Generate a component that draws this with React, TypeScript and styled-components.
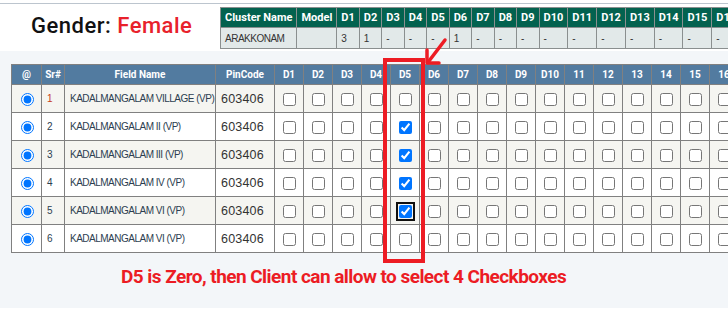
import React from "react";
import styled, { createGlobalStyle } from "styled-components";

const Global = createGlobalStyle`
  html, body { margin: 0; padding: 0; background: #fff; overflow: hidden; }
  body { font-family: "Liberation Sans", Arial, sans-serif; }
`;

const Page = styled.div`
  position: relative;
  width: 728px;
  height: 320px;
  overflow: hidden;
  background: #fff;
`;

const TopBar = styled.header`
  margin-top: 3px;
  border-top: 1px solid #bcc5ce;
  height: 47px;
  display: flex;
  align-items: flex-start;
  background: #fff;
`;

const Title = styled.h1`
  margin: 9px 0 0;
  width: 220px;
  box-sizing: border-box;
  padding-left: 31px;
  flex-shrink: 0;
  font-family: Roboto, "Liberation Sans", sans-serif;
  font-weight: 500;
  font-size: 22px;
  line-height: 26px;
  letter-spacing: 0.5px;
  color: #111;
  white-space: nowrap;
`;

const Accent = styled.span`
  color: #e8212b;
`;

const ClusterTable = styled.table`
  margin-top: 3px;
  border-collapse: collapse;
  flex-shrink: 0;
`;

const ClusterHead = styled.th`
  height: 20px;
  padding: 0 4px;
  box-sizing: border-box;
  background: #03624f;
  color: #fff;
  border: 1px solid #8a8f8f;
  font-family: Roboto, "Liberation Sans", sans-serif;
  font-weight: 700;
  font-size: 11px;
  white-space: nowrap;
  text-align: center;
`;

const ClusterCell = styled.td`
  height: 21px;
  padding: 0 4px;
  box-sizing: border-box;
  background: #e2e9e9;
  color: #333;
  border: 1px solid #8a8f8f;
  font-size: 10px;
  letter-spacing: -0.5px;
  white-space: nowrap;
  text-align: left;
`;

const Main = styled.main`
  background: #f3f6f9;
  padding: 13px 0 19px 11px;
`;

const Grid = styled.table`
  border-collapse: collapse;
  table-layout: fixed;
  width: 843px;
`;

const HeadCell = styled.th`
  height: 20px;
  padding: 0;
  box-sizing: border-box;
  background: #527ba0;
  color: #fff;
  border: 1px solid #808080;
  font-family: Roboto, "Liberation Sans", sans-serif;
  font-weight: 700;
  font-size: 10px;
  text-align: center;
  white-space: nowrap;
`;

const Row = styled.tr<{ $odd: boolean }>`
  background: ${(p) => (p.$odd ? "#f5f5f1" : "#ffffff")};
`;

const Cell = styled.td<{ $accent?: boolean }>`
  height: 28px;
  padding: 0 5px;
  box-sizing: border-box;
  border: 1px solid #808080;
  font-size: 10px;
  letter-spacing: -0.5px;
  color: ${(p) => (p.$accent ? "#c8401a" : "#2c3e50")};
  white-space: nowrap;
  overflow: hidden;
`;

const PinCell = styled(Cell)`
  font-size: 12.5px;
  letter-spacing: 0.2px;
  color: #333;
`;

const CenterCell = styled.td`
  height: 28px;
  padding: 0;
  box-sizing: border-box;
  border: 1px solid #808080;
  text-align: center;
  vertical-align: middle;
`;

const Radio = styled.input`
  vertical-align: middle;
  margin: 0 0 0 2px;
  width: 13px;
  height: 13px;
`;

const Check = styled.input<{ $focused?: boolean }>`
  vertical-align: middle;
  margin: 0 0 0 1px;
  width: 13px;
  height: 13px;
  ${(p) =>
    p.$focused
      ? `outline: 2px solid #101010; outline-offset: 1px;`
      : ``}
`;

const Note = styled.p`
  margin: 12px 0 0 110px;
  font-family: Roboto, "Liberation Sans", sans-serif;
  font-weight: 700;
  font-size: 19px;
  line-height: 24px;
  letter-spacing: -0.55px;
  color: #ec1c24;
  white-space: nowrap;
`;

const Highlight = styled.div`
  position: absolute;
  left: 383px;
  top: 58px;
  width: 42px;
  height: 205px;
  box-sizing: border-box;
  border: 4px solid #ed1c24;
  pointer-events: none;
`;

const Arrow = styled.svg`
  position: absolute;
  left: 420px;
  top: 34px;
  overflow: visible;
  pointer-events: none;
`;

const clusterCols = Array.from({ length: 17 }, (_, i) => `D${i + 1}`);
const clusterVals = ["3", "1", "-", "-", "-", "1", "-", "-", "-", "-", "-", "-", "-", "-", "-", "-", "-"];

const dCols = [
  ...Array.from({ length: 10 }, (_, i) => `D${i + 1}`),
  ...Array.from({ length: 10 }, (_, i) => `${i + 11}`),
];

const fields = [
  "KADALMANGALAM VILLAGE (VP)",
  "KADALMANGALAM II (VP)",
  "KADALMANGALAM III (VP)",
  "KADALMANGALAM IV (VP)",
  "KADALMANGALAM VI (VP)",
  "KADALMANGALAM VI (VP)",
];

const colWidths = [30, 23, 151, 59, ...dCols.map(() => 29)];

export default function App() {
  return (
    <Page>
      <Global />
      <TopBar>
        <Title>
          Gender: <Accent>Female</Accent>
        </Title>
        <ClusterTable>
          <thead>
            <tr>
              <ClusterHead>Cluster Name</ClusterHead>
              <ClusterHead>Model</ClusterHead>
              {clusterCols.map((c) => (
                <ClusterHead key={c}>{c}</ClusterHead>
              ))}
            </tr>
          </thead>
          <tbody>
            <tr>
              <ClusterCell>ARAKKONAM</ClusterCell>
              <ClusterCell></ClusterCell>
              {clusterVals.map((v, i) => (
                <ClusterCell key={i}>{v}</ClusterCell>
              ))}
            </tr>
          </tbody>
        </ClusterTable>
      </TopBar>
      <Main>
        <Grid>
          <colgroup>
            {colWidths.map((w, i) => (
              <col key={i} style={{ width: w }} />
            ))}
          </colgroup>
          <thead>
            <tr>
              <HeadCell>@</HeadCell>
              <HeadCell>Sr#</HeadCell>
              <HeadCell>Field Name</HeadCell>
              <HeadCell>PinCode</HeadCell>
              {dCols.map((d) => (
                <HeadCell key={d}>{d}</HeadCell>
              ))}
            </tr>
          </thead>
          <tbody>
            {fields.map((f, r) => (
              <Row key={r} $odd={r % 2 === 0}>
                <CenterCell>
                  <Radio type="radio" name={`sel${r}`} defaultChecked />
                </CenterCell>
                <Cell $accent={r === 0}>{r + 1}</Cell>
                <Cell>{f}</Cell>
                <PinCell>603406</PinCell>
                {dCols.map((d, c) => (
                  <CenterCell key={d}>
                    <Check
                      type="checkbox"
                      defaultChecked={c === 4 && r >= 1 && r <= 4}
                      $focused={c === 4 && r === 4}
                    />
                  </CenterCell>
                ))}
              </Row>
            ))}
          </tbody>
        </Grid>
        <Note>D5 is Zero, then Client can allow to select 4 Checkboxes</Note>
      </Main>
      <Highlight />
      <Arrow width="32" height="34" viewBox="0 0 32 34">
        <g fill="none" stroke="#ed1c24" strokeWidth="3.5" strokeLinecap="round" strokeLinejoin="round">
          <path d="M25 6 L9 27" />
          <path d="M7 16 L7 29 L19 29" />
        </g>
      </Arrow>
    </Page>
  );
}
